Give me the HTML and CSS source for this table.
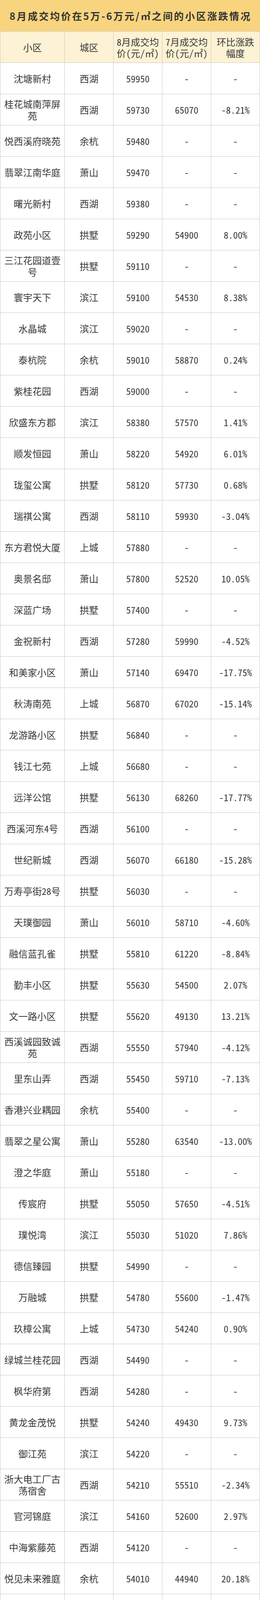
FILE: index.html
```html
<!DOCTYPE html>
<html lang="zh-CN">
<head>
<meta charset="utf-8">
<title>8月成交均价在5万-6万元/㎡之间的小区涨跌情况</title>
<link rel="stylesheet" href="styles.css">
</head>
<body>
<div class="page">
  <div class="title">8月成交均价在5万-6万元/㎡之间的小区涨跌情况</div>
  <div class="table">
    <div class="row head"><div><span>小区</span></div><div><span>城区</span></div><div><span>8月成交均价（元/㎡）</span></div><div><span>7月成交均价（元/㎡）</span></div><div><span>环比涨跌幅度</span></div></div>
    <div class="row"><div>沈塘新村</div><div>西湖</div><div>59950</div><div>-</div><div>-</div></div>
    <div class="row"><div>桂花城南萍屏苑</div><div>西湖</div><div>59730</div><div>65070</div><div>-8.21%</div></div>
    <div class="row"><div>悦西溪府晓苑</div><div>余杭</div><div>59480</div><div>-</div><div>-</div></div>
    <div class="row"><div>翡翠江南华庭</div><div>萧山</div><div>59470</div><div>-</div><div>-</div></div>
    <div class="row"><div>曙光新村</div><div>西湖</div><div>59380</div><div>-</div><div>-</div></div>
    <div class="row"><div>政苑小区</div><div>拱墅</div><div>59290</div><div>54900</div><div>8.00%</div></div>
    <div class="row"><div>三江花园道壹号</div><div>拱墅</div><div>59110</div><div>-</div><div>-</div></div>
    <div class="row"><div>寰宇天下</div><div>滨江</div><div>59100</div><div>54530</div><div>8.38%</div></div>
    <div class="row"><div>水晶城</div><div>滨江</div><div>59020</div><div>-</div><div>-</div></div>
    <div class="row"><div>泰杭院</div><div>余杭</div><div>59010</div><div>58870</div><div>0.24%</div></div>
    <div class="row"><div>紫桂花园</div><div>西湖</div><div>59000</div><div>-</div><div>-</div></div>
    <div class="row"><div>欣盛东方郡</div><div>滨江</div><div>58380</div><div>57570</div><div>1.41%</div></div>
    <div class="row"><div>顺发恒园</div><div>萧山</div><div>58220</div><div>54920</div><div>6.01%</div></div>
    <div class="row"><div>珑玺公寓</div><div>拱墅</div><div>58120</div><div>57730</div><div>0.68%</div></div>
    <div class="row"><div>瑞祺公寓</div><div>西湖</div><div>58110</div><div>59930</div><div>-3.04%</div></div>
    <div class="row"><div>东方君悦大厦</div><div>上城</div><div>57880</div><div>-</div><div>-</div></div>
    <div class="row"><div>奥景名邸</div><div>萧山</div><div>57800</div><div>52520</div><div>10.05%</div></div>
    <div class="row"><div>深蓝广场</div><div>拱墅</div><div>57400</div><div>-</div><div>-</div></div>
    <div class="row"><div>金祝新村</div><div>西湖</div><div>57280</div><div>59990</div><div>-4.52%</div></div>
    <div class="row"><div>和美家小区</div><div>萧山</div><div>57140</div><div>69470</div><div>-17.75%</div></div>
    <div class="row"><div>秋涛南苑</div><div>上城</div><div>56870</div><div>67020</div><div>-15.14%</div></div>
    <div class="row"><div>龙游路小区</div><div>拱墅</div><div>56840</div><div>-</div><div>-</div></div>
    <div class="row"><div>钱江七苑</div><div>上城</div><div>56680</div><div>-</div><div>-</div></div>
    <div class="row"><div>远洋公馆</div><div>拱墅</div><div>56130</div><div>68260</div><div>-17.77%</div></div>
    <div class="row"><div>西溪河东4号</div><div>西湖</div><div>56100</div><div>-</div><div>-</div></div>
    <div class="row"><div>世纪新城</div><div>西湖</div><div>56070</div><div>66180</div><div>-15.28%</div></div>
    <div class="row"><div>万寿亭街28号</div><div>拱墅</div><div>56030</div><div>-</div><div>-</div></div>
    <div class="row"><div>天璞御园</div><div>萧山</div><div>56010</div><div>58710</div><div>-4.60%</div></div>
    <div class="row"><div>融信蓝孔雀</div><div>拱墅</div><div>55810</div><div>61220</div><div>-8.84%</div></div>
    <div class="row"><div>勤丰小区</div><div>拱墅</div><div>55630</div><div>54500</div><div>2.07%</div></div>
    <div class="row"><div>文一路小区</div><div>拱墅</div><div>55620</div><div>49130</div><div>13.21%</div></div>
    <div class="row"><div>西溪诚园致诚苑</div><div>西湖</div><div>55550</div><div>57940</div><div>-4.12%</div></div>
    <div class="row"><div>里东山弄</div><div>西湖</div><div>55450</div><div>59710</div><div>-7.13%</div></div>
    <div class="row"><div>香港兴业耦园</div><div>余杭</div><div>55400</div><div>-</div><div>-</div></div>
    <div class="row"><div>翡翠之星公寓</div><div>萧山</div><div>55280</div><div>63540</div><div>-13.00%</div></div>
    <div class="row"><div>澄之华庭</div><div>萧山</div><div>55180</div><div>-</div><div>-</div></div>
    <div class="row"><div>传宸府</div><div>拱墅</div><div>55050</div><div>57650</div><div>-4.51%</div></div>
    <div class="row"><div>璞悦湾</div><div>滨江</div><div>55030</div><div>51020</div><div>7.86%</div></div>
    <div class="row"><div>德信臻园</div><div>拱墅</div><div>54990</div><div>-</div><div>-</div></div>
    <div class="row"><div>万融城</div><div>拱墅</div><div>54780</div><div>55600</div><div>-1.47%</div></div>
    <div class="row"><div>玖樟公寓</div><div>上城</div><div>54730</div><div>54240</div><div>0.90%</div></div>
    <div class="row"><div>绿城兰桂花园</div><div>西湖</div><div>54490</div><div>-</div><div>-</div></div>
    <div class="row"><div>枫华府第</div><div>西湖</div><div>54280</div><div>-</div><div>-</div></div>
    <div class="row"><div>黄龙金茂悦</div><div>拱墅</div><div>54240</div><div>49430</div><div>9.73%</div></div>
    <div class="row"><div>御江苑</div><div>滨江</div><div>54220</div><div>-</div><div>-</div></div>
    <div class="row"><div>浙大电工厂古荡宿舍</div><div>西湖</div><div>54210</div><div>55510</div><div>-2.34%</div></div>
    <div class="row"><div>官河锦庭</div><div>滨江</div><div>54160</div><div>52600</div><div>2.97%</div></div>
    <div class="row"><div>中海紫藤苑</div><div>西湖</div><div>54120</div><div>-</div><div>-</div></div>
    <div class="row"><div>悦见未来雅庭</div><div>余杭</div><div>54010</div><div>44940</div><div>20.18%</div></div>
    <div class="row"><div>欣盛东方福邸</div><div>拱墅</div><div>53970</div><div>54120</div><div>-0.28%</div></div>
    <div class="row"><div>锦绣文澜阁</div><div>拱墅</div><div>53670</div><div>-</div><div>-</div></div>
    <div class="row"><div>景城花园</div><div>西湖</div><div>53610</div><div>-</div><div>-</div></div>
    <div class="row"><div>御道江河汇流公寓</div><div>上城</div><div>53590</div><div>-</div><div>-</div></div>
    <div class="row"><div>东新府</div><div>拱墅</div><div>53560</div><div>45650</div><div>17.33%</div></div>
    <div class="row"><div>绿城西溪融庄</div><div>余杭</div><div>53560</div><div>-</div><div>-</div></div>
    <div class="row"><div>嘉绿苑</div><div>西湖</div><div>53330</div><div>50650</div><div>5.29%</div></div>
    <div class="row"><div>滨江紫金府</div><div>拱墅</div><div>53220</div><div>67810</div><div>-21.52%</div></div>
    <div class="row"><div>采荷东区</div><div>上城</div><div>52660</div><div>46520</div><div>13.20%</div></div>
    <div class="row"><div>华府花园</div><div>上城</div><div>52520</div><div>51920</div><div>1.16%</div></div>
    <div class="row"><div>天誉湾</div><div>上城</div><div>52430</div><div>-</div><div>-</div></div>
    <div class="row"><div>西岸花园</div><div>拱墅</div><div>51980</div><div>-</div><div>-</div></div>
    <div class="row"><div>延安路灯芯巷</div><div>拱墅</div><div>51940</div><div>-</div><div>-</div></div>
    <div class="row"><div>富越香郡</div><div>拱墅</div><div>51920</div><div>-</div><div>-</div></div>
    <div class="row"><div>昆仑公寓</div><div>拱墅</div><div>51810</div><div>-</div><div>-</div></div>
    <div class="row"><div>锦绣申华坊</div><div>拱墅</div><div>51770</div><div>-</div><div>-</div></div>
    <div class="row"><div>逸境公寓</div><div>余杭</div><div>51720</div><div>52400</div><div>-1.30%</div></div>
    <div class="row"><div>钱江彩虹城</div><div>滨江</div><div>51600</div><div>43730</div><div>18.00%</div></div>
    <div class="row"><div>创世邸</div><div>萧山</div><div>51540</div><div>59680</div><div>-13.64%</div></div>
    <div class="row"><div>柴校坊</div><div>上城</div><div>51340</div><div>-</div><div>-</div></div>
    <div class="row"><div>蓝色霞湾</div><div>拱墅</div><div>51290</div><div>-</div><div>-</div></div>
    <div class="row"><div>天阳半岛国际</div><div>滨江</div><div>51220</div><div>54480</div><div>-5.98%</div></div>
    <div class="row"><div>和谐嘉园南苑</div><div>上城</div><div>51200</div><div>-</div><div>-</div></div>
    <div class="row"><div>钱塘山水湾</div><div>滨江</div><div>51180</div><div>48670</div><div>5.16%</div></div>
    <div class="row"><div>友谊新村</div><div>西湖</div><div>51160</div><div>52540</div><div>-2.63%</div></div>
    <div class="row"><div>世纪新筑</div><div>拱墅</div><div>51030</div><div>-</div><div>-</div></div>
    <div class="row"><div>尚都会新座</div><div>萧山</div><div>51020</div><div>-</div><div>-</div></div>
    <div class="row"><div>铂金时代公寓</div><div>滨江</div><div>50930</div><div>-</div><div>-</div></div>
    <div class="row"><div>嘉绿苑北</div><div>西湖</div><div>50880</div><div>-</div><div>-</div></div>
    <div class="row"><div>合景映月台</div><div>余杭</div><div>50810</div><div>53990</div><div>-5.89%</div></div>
    <div class="row"><div>星洲花园</div><div>西湖</div><div>50750</div><div>-</div><div>-</div></div>
    <div class="row"><div>倾城之恋花园</div><div>滨江</div><div>50620</div><div>49530</div><div>2.20%</div></div>
    <div class="row"><div>碧月华庭</div><div>拱墅</div><div>50590</div><div>-</div><div>-</div></div>
    <div class="row"><div>名都苑名都苑</div><div>西湖</div><div>50580</div><div>-</div><div>-</div></div>
    <div class="row"><div>春秋华庭</div><div>拱墅</div><div>50500</div><div>-</div><div>-</div></div>
    <div class="row"><div>洪福桥弄</div><div>上城</div><div>50250</div><div>-</div><div>-</div></div>
    <div class="row"><div>钱江华府</div><div>上城</div><div>50120</div><div>-</div><div>-</div></div>
  </div>
</div>
</body>
</html>
```

FILE: styles.css
```css
html, body {
  margin: 0;
  padding: 0;
  background: #ffffff;
}

body {
  font-family: "Noto Sans CJK SC", "Noto Sans", sans-serif;
  color: #3b3b3b;
}

.page {
  width: 666px;
}

.title {
  height: 80px;
  background: #f8d47f;
  display: flex;
  align-items: center;
  justify-content: center;
  padding-left: 3px;
  box-sizing: border-box;
  font-size: 25px;
  font-weight: 700;
  letter-spacing: 3.4px;
  color: #333333;
  white-space: nowrap;
}

.table {
  border-bottom: 1px solid #c9c9c9;
}

.row {
  display: grid;
  grid-template-columns: 165px 125px 125px 125px 126px;
  height: 80px;
  overflow: hidden;
}

.row > div {
  box-sizing: border-box;
  height: 80px;
  border-left: 1px solid #c9c9c9;
  border-top: 1px solid #c9c9c9;
  display: flex;
  align-items: center;
  justify-content: center;
  text-align: center;
  padding: 0 6px;
  font-size: 24px;
  line-height: 30px;
  font-feature-settings: "hwid" 1;
}

.row > div:last-child {
  border-right: 1px solid #c9c9c9;
}

.head > div {
  background: #fdf2d4;
  line-height: 29px;
  font-feature-settings: "hwid" 1, "halt" 1;
}

.head span {
  display: block;
}
```
